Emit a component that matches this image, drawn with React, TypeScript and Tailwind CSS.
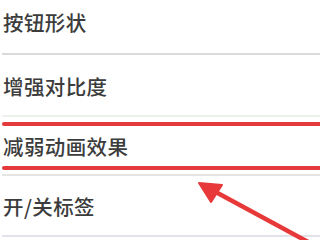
const rows = [
  { label: '按钮形状', h: 'h-[55px]', pad: 'pb-[8px]', line: 'border-[#dadada]' },
  { label: '增强对比度', h: 'h-[62px]', pad: 'pt-[2px]', line: 'border-[#eef2ec]' },
  { label: '减弱动画效果', h: 'h-[59px]', pad: 'pt-[1px]', line: 'border-[#e4e4e4]' },
  { label: '开/关标签', h: 'h-[61px]', pad: 'pt-[1px]', line: 'border-[#e2e2ea]' },
];

function Arrow() {
  return (
    <svg className="absolute left-0 top-0" width="320" height="240" viewBox="0 0 320 240">
      <line x1="212" y1="190" x2="310" y2="243" stroke="#e8393a" strokeWidth="4.5" strokeLinecap="round" />
      <polygon points="199,183 222,185 211,202" fill="#e8393a" stroke="#e8393a" strokeWidth="2" strokeLinejoin="round" />
    </svg>
  );
}

export default function App() {
  return (
    <div
      className="relative w-[320px] h-[240px] overflow-hidden bg-white"
      style={{ fontFamily: '"Noto Sans CJK SC", "Noto Sans", sans-serif' }}
    >
      <div className="flex flex-col">
        {rows.map((r) => (
          <div key={r.label} className={`flex items-center ml-[2px] border-b-2 ${r.h} ${r.pad} ${r.line}`}>
            <span className="pl-[1px] text-[20.5px] font-medium leading-none text-[#3c3c3c] tracking-[0.4px]">{r.label}</span>
          </div>
        ))}
      </div>
      <div className="absolute left-[2px] right-0 top-[122px] h-[4px] rounded-l-full bg-[#e53a3b]" />
      <div className="absolute left-[2px] right-0 top-[166px] h-[4px] rounded-l-full bg-[#e53a3b]" />
      <Arrow />
    </div>
  );
}
